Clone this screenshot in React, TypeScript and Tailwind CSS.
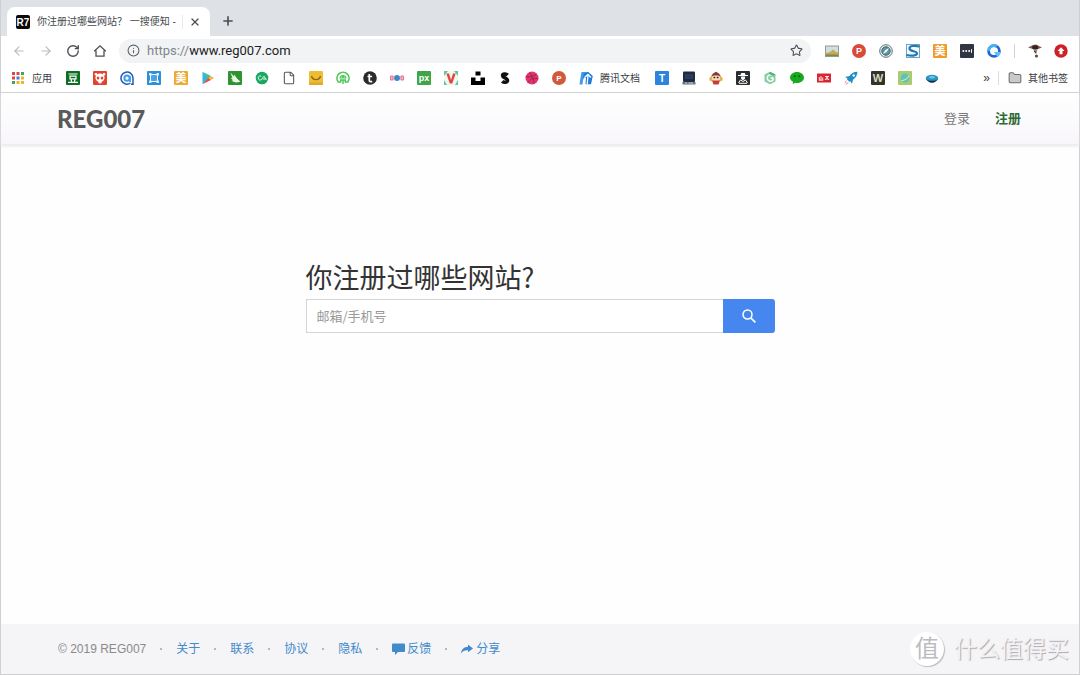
import React from 'react';
import { ArrowLeft, ArrowRight, RotateCw, Info, Star, X, Plus, Folder, File } from 'lucide-react';

type IconItem = { name: string; icon: React.ReactNode; label?: string };

const Svg = ({ children }: { children: React.ReactNode }) => (
  <svg viewBox="0 0 14 14" className="w-[14px] h-[14px] shrink-0" aria-hidden="true">{children}</svg>
);

const Tile = ({ fill, text, color = '#fff', round = false, size = 9 }: { fill: string; text: string; color?: string; round?: boolean; size?: number }) => (
  <Svg>
    <rect width="14" height="14" rx={round ? 7 : 1} fill={fill} />
    <text x="7" y={7 + size * 0.37} textAnchor="middle" fontSize={size} fontWeight="700" fill={color}>{text}</text>
  </Svg>
);

const BOOKMARKS: IconItem[] = [
  {
    name: '豆瓣',
    icon: (
      <Svg>
        <rect width="14" height="14" rx="1" fill="#0d6e22" />
        <path d="M2.5 3h9M4 5.2h6v2.6H4zM2 11.3h10M5 8.5l.7 2.5M9 8.5l-.7 2.5" stroke="#fff" strokeWidth="1.2" fill="none" />
      </Svg>
    ),
  },
  {
    name: 'panda',
    icon: (
      <Svg>
        <rect width="14" height="14" rx="1" fill="#e2442f" />
        <circle cx="3" cy="3.2" r="1.3" fill="#fff" />
        <circle cx="11" cy="3.2" r="1.3" fill="#fff" />
        <ellipse cx="7" cy="6.8" rx="4.6" ry="4.2" fill="#fff" />
        <ellipse cx="5" cy="7" rx="1.3" ry="1.5" fill="#e2442f" />
        <ellipse cx="9" cy="7" rx="1.3" ry="1.5" fill="#e2442f" />
        <path d="M5.500 10h3v2.300h-3z" fill="#fff" />
      </Svg>
    ),
  },
  {
    name: 'a-ring',
    icon: (
      <Svg>
        <path d="M10.500 12A6 6 0 1 1 13 7v6.300h-2" stroke="#2857b5" strokeWidth="1.500" fill="none" />
        <circle cx="7" cy="7.200" r="2.600" stroke="#3aa0e8" strokeWidth="2" fill="none" />
        <path d="M10 5v6" stroke="#3aa0e8" strokeWidth="1.800" />
      </Svg>
    ),
  },
  {
    name: 'frame',
    icon: (
      <Svg>
        <rect width="14" height="14" rx="1" fill="#2f8fd8" />
        <rect x="3.5" y="3.5" width="7" height="7" fill="#4aa3e4" stroke="#fff" />
        <path d="M2 2h2.5v2.5H2zM9.500 2H12v2.500H9.500zM2 9.500h2.500V12H2zM9.500 9.500H12V12H9.500z" fill="#d6ecfb" />
      </Svg>
    ),
  },
  { name: '美', icon: <Tile fill="#f0a834" text="美" size={11} /> },
  {
    name: 'play',
    icon: (
      <Svg>
        <path d="M1.500 .8v12.400L7.500 7z" fill="#34b7d6" />
        <path d="M1.500 .8L10 5 7.500 7.500z" fill="#3cc48a" />
        <path d="M1.500 13.200L10 9 7.500 6.500z" fill="#e8475a" />
        <path d="M9.700 4.900L13.300 7 9.700 9.100 7.300 7z" fill="#f6b93b" />
      </Svg>
    ),
  },
  {
    name: 'leaf',
    icon: (
      <Svg>
        <rect width="14" height="14" rx="1" fill="#2f9331" />
        <path d="M2.500 1.500l3.500 4 .3-2L9 7.500l3.500 3.200L8 11.500 3.500 10l1.500-.8L2.800 7l1.500-.3z" fill="#e9f7e4" />
      </Svg>
    ),
  },
  {
    name: 'cn',
    icon: (
      <Svg>
        <circle cx="7" cy="7" r="6.300" fill="#1aa75f" />
        <path d="M6.300 5.200a2.100 2.100 0 1 0 0 3.600L9 5.200l2 3.400M7.800 8h3.600" stroke="#e2f7ec" strokeWidth="1" fill="none" />
      </Svg>
    ),
  },
  { name: 'page', icon: <File className="w-[14px] h-[14px] text-[#555]" strokeWidth={1.8} /> },
  {
    name: 'smile',
    icon: (
      <Svg>
        <rect width="14" height="14" rx="1" fill="#efbd34" />
        <path d="M2.500 5c1 4.800 8 4.800 9 0" stroke="#8b6317" strokeWidth="1.3" fill="none" />
        <path d="M0 11.500h14V13a1 1 0 0 1-1 1H1a1 1 0 0 1-1-1z" fill="#dda92c" />
      </Svg>
    ),
  },
  {
    name: 'android',
    icon: (
      <Svg>
        <path d="M2 10.500A6 6 0 1 1 12 10.500" stroke="#4cc552" strokeWidth="1.600" fill="none" />
        <path d="M3.500 7.500a3.500 3.500 0 0 1 7 0z" fill="#4cc552" />
        <path d="M1.500 11h3.200V9h4.600v2h3.200M7 9v4" stroke="#4cc552" strokeWidth="1.400" fill="none" />
        <circle cx="5.700" cy="6" r=".6" fill="#fff" />
        <circle cx="8.300" cy="6" r=".6" fill="#fff" />
      </Svg>
    ),
  },
  {
    name: 't-circle',
    icon: (
      <Svg>
        <circle cx="7" cy="7" r="6.800" fill="#2b2b2b" />
        <path d="M6.300 3v6.200c0 1.600 1.500 1.700 2.900 1.200M4.500 5.500h4.600" stroke="#fff" strokeWidth="1.700" fill="none" />
      </Svg>
    ),
  },
  {
    name: 'dots',
    icon: (
      <Svg>
        <rect x="0" y="4.500" width="3.600" height="5" rx="1" fill="#e2758c" />
        <circle cx="7" cy="7" r="3" fill="#3f87c8" />
        <rect x="10.400" y="4.500" width="3.600" height="5" rx="1" fill="#e2758c" />
        <path d="M1.800 5.500v3M12.200 5.500v3" stroke="#fff" strokeWidth=".7" />
      </Svg>
    ),
  },
  { name: 'px', icon: <Tile fill="#3fa548" text="px" size={9} /> },
  {
    name: 'v-frame',
    icon: (
      <Svg>
        <rect width="14" height="14" fill="#f1f8e6" />
        <path d="M0 0h4L0 5zM14 0h-4l4 5zM0 14V9l3 5zM14 14V9l-3 5z" fill="#5ec3b4" />
        <path d="M2.300 2.500L5.800 12.500h2.400l3.500-10H9L7 9 5 2.500z" fill="#e04545" />
      </Svg>
    ),
  },
  {
    name: 'unsplash',
    icon: (
      <Svg>
        <path d="M4.500 .5h5v4h-5zM0 6.500h4.500v3.500h5V6.500H14V14H0z" fill="#000" />
      </Svg>
    ),
  },
  {
    name: 's-mark',
    icon: (
      <Svg>
        <path d="M9.700 4C8 2.400 4.600 2.600 4.600 4.700S9.500 7 9.500 9.300 6 11.900 4.300 10.200" stroke="#111" strokeWidth="3.600" fill="none" />
      </Svg>
    ),
  },
  {
    name: 'dribbble',
    icon: (
      <Svg>
        <circle cx="7" cy="7" r="6.500" fill="#e0346f" />
        <path d="M4.500 1.500C7 4.500 8.500 8 9.200 12.600M.8 6c4 .2 8-.3 10.500-3M3 12c1.500-3.500 5-5.500 10.200-4.200" stroke="#a01d4b" strokeWidth=".9" fill="none" />
      </Svg>
    ),
  },
  { name: 'p-circle', icon: <Tile fill="#d2583c" text="P" round size={8} /> },
  {
    name: 'docs',
    label: '腾讯文档',
    icon: (
      <Svg>
        <path d="M2.500 1H8l-1.500 3L4 9l-.5 4.500H.5l1-7z" fill="#3d9be9" />
        <path d="M5 2.500L9 .8 13.800 5 12 13.200H6.500L7 7 4 6.500z" fill="#1f7bd8" />
        <path d="M5.500 6.500L9 3.500l3 3M9 4.500l-.8 8.700" stroke="#fff" strokeWidth="1.300" fill="none" />
      </Svg>
    ),
  },
  { name: 't-tile', icon: <Tile fill="#2d84dc" text="T" size={10} /> },
  {
    name: 'book',
    icon: (
      <Svg>
        <rect x="1" y=".5" width="12" height="10.500" rx="1" fill="#1f2b45" />
        <path d="M3 3h8v5H3z" fill="#2b3c5c" />
        <path d="M.5 11h13v2.500H.5z" fill="#68727f" />
        <path d="M3 12h2M6.500 12h4.500" stroke="#fff" strokeWidth=".7" />
      </Svg>
    ),
  },
  {
    name: 'avatar',
    icon: (
      <Svg>
        <circle cx="2.500" cy="8" r="2.300" fill="#e9b04c" />
        <circle cx="11.500" cy="8" r="2.300" fill="#e9b04c" />
        <path d="M2 5.500L4 2.500 7 .8l3 1.700 2 3z" fill="#8d3a2c" />
        <rect x="3" y="4.500" width="8" height="5.500" rx="2" fill="#f6dcc2" />
        <path d="M3 9.500h8L9.500 13.500h-5z" fill="#c83d2d" />
        <path d="M4.500 6.500h1.700M7.800 6.500h1.700" stroke="#322" strokeWidth="1.300" />
      </Svg>
    ),
  },
  {
    name: 'spy',
    icon: (
      <Svg>
        <rect width="14" height="14" rx="1" fill="#2b2e31" />
        <path d="M5.200 2h3.600l.7 2H12v1H2V4h2.500zM4.800 5.500h4.400L8.800 8 7 9.300 5.200 8z" fill="#fff" />
        <path d="M2.500 12l2-3L7 10.500 9.500 9l2 3M3 12.300h8" stroke="#fff" fill="none" />
      </Svg>
    ),
  },
  {
    name: 'c-hex',
    icon: (
      <Svg>
        <path d="M7 .8L12.500 3.500v7L7 13.300 1.500 10.500v-7z" fill="#83cfa1" />
        <path d="M9.800 4.800A3.200 3.200 0 1 0 10 9V7H7.500" stroke="#fff" strokeWidth="1.500" fill="none" />
        <path d="M7 .8L12.500 3.500 10 5 6 3z" fill="#53b37a" />
      </Svg>
    ),
  },
  {
    name: 'wechat',
    icon: (
      <Svg>
        <path d="M7 1c4 0 7 2.500 7 5.500S11 12 7 12c-.7 0-1.300-.1-1.900-.2L2.700 13.300l.4-2.500C1.200 9.900 0 8.300 0 6.500 0 3.500 3 1 7 1z" fill="#19a91f" />
        <circle cx="4.700" cy="5.300" r="1" fill="#0b5d10" />
        <circle cx="9.300" cy="5.300" r="1" fill="#0b5d10" />
      </Svg>
    ),
  },
  {
    name: 'red-label',
    icon: (
      <Svg>
        <rect y="2.500" width="14" height="9" rx=".5" fill="#dc2430" />
        <path d="M2.300 8.800V6M4 9V5M5.700 8.800V6.500M1.800 9.200h4.500M8 5.500h4M10 5v4M8 9l2-2.500L12 9" stroke="#fff" strokeWidth=".9" fill="none" />
      </Svg>
    ),
  },
  {
    name: 'rocket',
    icon: (
      <Svg>
        <path d="M13.500 .8C9.500 .8 7 2.700 5.500 5L1 6l2.500 1.500-.5 1 2.500 2.300 1-.5L8 13l1-4.300C11.500 7 13.300 4.500 13.500.8z" fill="#1d8fc6" />
        <circle cx="9.700" cy="4.500" r="1.200" fill="#fff" />
        <path d="M2.500 10L.8 11.700M4 11.500l-2 2" stroke="#d9534f" strokeWidth="1" />
      </Svg>
    ),
  },
  { name: 'w-tile', icon: <Tile fill="#33332a" color="#d8d8c4" text="W" size={11} /> },
  {
    name: 'planet',
    icon: (
      <Svg>
        <rect width="14" height="14" rx="1" fill="#a8cc72" />
        <circle cx="7" cy="7" r="4.400" fill="#5fc2b4" />
        <path d="M3.500 9.500C7 9.500 10 7.500 10.800 4.800" fill="none" stroke="#e6f5d8" strokeWidth=".9" />
      </Svg>
    ),
  },
  {
    name: 'disc',
    icon: (
      <Svg>
        <path d="M.8 7.300C1.500 10 4.500 11.800 7 11.800s5.500-1.800 6.200-4.500z" fill="#172c48" />
        <ellipse cx="7" cy="6.800" rx="6.200" ry="3" fill="#2696c8" />
        <ellipse cx="7" cy="6.300" rx="3" ry="1.200" fill="#6cc4e4" />
      </Svg>
    ),
  },
];

const EXTENSIONS: IconItem[] = [
  {
    name: 'picture',
    icon: (
      <Svg>
        <rect x=".5" y="2" width="13" height="10.500" fill="#cfdde4" stroke="#9a9a90" />
        <path d="M1 9l4-1 3-2.500L11 8l2 .5V11H1z" fill="#c9a94b" />
        <path d="M1 10.500h12V12H1z" fill="#6f8f52" />
      </Svg>
    ),
  },
  { name: 'p-red', icon: <Tile fill="#d94a38" text="P" round size={9} /> },
  {
    name: 'compass',
    icon: (
      <Svg>
        <circle cx="7" cy="7" r="6.300" fill="#e8f1f2" stroke="#58747c" />
        <circle cx="7" cy="7" r="4.200" fill="#5f97a8" stroke="#3d5c66" />
        <path d="M10 4L7.800 7.800 4 10l2.200-3.800z" fill="#fff" />
      </Svg>
    ),
  },
  {
    name: 's-cut',
    icon: (
      <Svg>
        <rect x=".5" y=".5" width="13" height="13" fill="#f2f8fb" stroke="#6aa3c4" />
        <path d="M13.500 2.500C8 1 3 2 3.500 4.800S11.500 7 11 9.500 5 12 .5 11" stroke="#2479b0" strokeWidth="2.200" fill="none" />
      </Svg>
    ),
  },
  { name: '美', icon: <Tile fill="#f19a2c" text="美" size={11} /> },
  {
    name: 'password',
    icon: (
      <Svg>
        <rect width="14" height="14" rx="1" fill="#2f3542" />
        <circle cx="3.300" cy="7" r="1" fill="#fff" />
        <circle cx="6.200" cy="7" r="1" fill="#fff" />
        <circle cx="9.100" cy="7" r="1" fill="#fff" />
        <path d="M11.500 5.200v3.600" stroke="#fff" />
      </Svg>
    ),
  },
  {
    name: 'q-ring',
    icon: (
      <Svg>
        <circle cx="7" cy="7" r="5.400" fill="none" stroke="#2563d9" strokeWidth="2.800" />
        <path d="M1.600 7A5.400 5.400 0 0 1 9.500 2.200" stroke="#42b4f5" strokeWidth="2.800" fill="none" />
        <path d="M7 8h6v2.500L10.500 13z" fill="#55c4f7" />
      </Svg>
    ),
  },
];

const FOOTER_LINKS = ['关于', '联系', '协议', '隐私'];

const TabStrip = () => (
  <div className="flex items-end h-9 pl-[6px] bg-[#dee1e6]">
    <div className="flex items-center h-[29px] w-[203px] px-[9px] rounded-t-lg bg-white">
      <Svg>
        <rect width="14" height="14" rx="2" fill="#0a0a0a" />
        <text x="7" y="10.500" textAnchor="middle" fontSize="10" fontWeight="700" fill="#fff">R7</text>
      </Svg>
      <span className="flex-1 ml-[7px] overflow-hidden whitespace-nowrap text-[10px] text-[#45494d]">你注册过哪些网站？ 一搜便知 -</span>
      <span className="w-px h-[14px] mr-[6px] bg-[#e8e8e8]" />
      <button aria-label="关闭标签页" className="text-[#4b4f54]"><X className="w-3 h-3" strokeWidth={2.400} /></button>
    </div>
    <button aria-label="新标签页" className="self-center ml-[11px] mt-[6px] text-[#4b4f54]"><Plus className="w-[14px] h-[14px]" strokeWidth={2.800} /></button>
  </div>
);

const Toolbar = () => (
  <div className="flex items-center h-7 px-[11px] pt-px bg-white">
    <div className="flex items-center gap-[13px] text-[#4b4f54]">
      <button aria-label="后退" className="text-[#b9bbbe]"><ArrowLeft className="w-[14px] h-[14px]" strokeWidth={2} /></button>
      <button aria-label="前进" className="text-[#b9bbbe]"><ArrowRight className="w-[14px] h-[14px]" strokeWidth={2} /></button>
      <button aria-label="重新加载"><RotateCw className="w-[14px] h-[14px]" strokeWidth={2.400} /></button>
      <button aria-label="主页">
        <svg viewBox="0 0 14 14" className="w-[14px] h-[14px]" fill="none" stroke="currentColor" strokeWidth="1.300" aria-hidden="true">
          <path d="M1.200 7.300L7 1.800l5.800 5.500M3 6.500v5.700h8V6.500" />
        </svg>
      </button>
    </div>
    <div className="flex flex-1 items-center h-6 ml-3 pl-2 pr-[8px] rounded-full bg-[#f1f3f4]">
      <Info className="w-[13px] h-[13px] shrink-0 text-[#5f6368]" strokeWidth={2} />
      <a href="#" className="flex-1 ml-[7px] font-[Roboto,sans-serif] text-[13px] leading-5 text-[#202124]">
        <span className="text-[#80868b]">https://</span>www.reg007.com
      </a>
      <button aria-label="收藏" className="text-[#4b4f54]"><Star className="w-[13px] h-[13px]" strokeWidth={2} /></button>
    </div>
    <div className="flex items-center gap-[13px] ml-[14px]">
      {EXTENSIONS.map(ext => (
        <button key={ext.name} aria-label={ext.name}>{ext.icon}</button>
      ))}
      <span className="w-px h-[14px] bg-[#cfd1d4]" />
      <div className="flex items-center gap-3">
        <button aria-label="用户">
          <Svg>
            <path d="M0 3.500L5 1l3-.5L14 3.500 10 5 4 4.800z" fill="#8b5a48" />
            <ellipse cx="7.200" cy="3.500" rx="3" ry="2.200" fill="#2c2622" />
            <path d="M5.500 5.500h4L8.500 9.500l-1.500.3z" fill="#998c82" />
            <path d="M6 7l2 1.500" stroke="#322" />
            <circle cx="8.500" cy="12" r="1.600" fill="#55504d" />
          </Svg>
        </button>
        <button aria-label="更新">
          <Svg>
            <circle cx="7" cy="7" r="6.700" fill="#cf2027" />
            <path d="M7 3.200L10.500 7H8.500v3.300h-3V7h-2z" fill="#fff" />
          </Svg>
        </button>
      </div>
    </div>
  </div>
);

const APP_COLORS = ['#e0473c', '#e0473c', '#3fa75a', '#e0473c', '#3f7fe0', '#f0b330', '#3fa75a', '#f0b330', '#f0b330'];

const BookmarkBar = () => (
  <nav className="flex items-center h-[29px] px-[11px] border-b border-[#cfcfd1] bg-white text-[10px] text-[#3c4043]">
    <a href="#" className="flex items-center gap-2 mr-[14px]">
      <svg viewBox="0 0 12 12" className="w-3 h-3" aria-hidden="true">
        {APP_COLORS.map((c, i) => (
          <rect key={i} x={(i % 3) * 4.5} y={Math.floor(i / 3) * 4.5} width="3" height="3" fill={c} />
        ))}
      </svg>
      应用
    </a>
    <div className="flex flex-1 items-center gap-[13px]">
      {BOOKMARKS.map(b => (
        <a key={b.name} href="#" aria-label={b.name} className="flex items-center gap-[7px] whitespace-nowrap">
          {b.icon}
          {b.label && <span className="pr-[2px]">{b.label}</span>}
        </a>
      ))}
    </div>
    <button aria-label="更多书签" className="mr-2 text-[12px]">»</button>
    <span className="w-px h-[14px] mr-[9px] bg-[#dcdde0]" />
    <button className="flex items-center gap-[6px]">
      <Folder className="w-[14px] h-[14px] text-[#6a6d70]" fill="#c9cacc" strokeWidth={1.800} />
      其他书签
    </button>
  </nav>
);

const App: React.FC = () => {
  return (
    <div className="flex flex-col min-h-screen border-x border-b border-[#d0d0d2] bg-[#fefefe] font-['Liberation_Sans','Noto_Sans_CJK_SC',sans-serif]">
      <TabStrip />
      <Toolbar />
      <BookmarkBar />

      <header className="flex items-center justify-between h-[52px] pl-14 pr-[58px] border-b border-[#eeedf0] bg-linear-to-b from-white to-[#f8f6fa] shadow-[0_1px_3px_#e4e4e6]">
        <a href="#" className="font-[Lato,sans-serif] text-[24px] font-black text-[#5a5a5a]">REG007</a>
        <div className="flex gap-[25px] text-[13px]">
          <a href="#" className="text-[#777]">登录</a>
          <a href="#" className="font-bold text-[#2f6b35]">注册</a>
        </div>
      </header>

      <main className="flex-1 w-full max-w-[469px] mx-auto pt-[114px] font-['Noto_Sans_CJK_SC',sans-serif]">
        <h1 className="text-[27px] leading-9 text-[#333]"><label htmlFor="account">你注册过哪些网站?</label></h1>
        <form className="flex h-[34px] mt-1" onSubmit={e => e.preventDefault()}>
          <input
            id="account"
            type="text"
            placeholder="邮箱/手机号"
            className="flex-1 min-w-0 px-[10px] border border-r-0 border-[#d5d5d8] bg-white text-[13px] text-[#333] placeholder:text-[#999] outline-none"
          />
          <button aria-label="搜索" className="flex items-center justify-center w-[52px] rounded-r-[3px] bg-[#4587ef] text-white">
            <svg viewBox="0 0 14 14" className="w-[14px] h-[14px]" fill="none" stroke="currentColor" aria-hidden="true">
              <circle cx="5.500" cy="5.500" r="4.500" strokeWidth="1.500" />
              <path d="M8.800 8.800l4.500 4.500" strokeWidth="1.800" />
            </svg>
          </button>
        </form>
      </main>

      <footer className="flex items-center justify-between h-[50px] pl-[57px] pr-[10px] bg-[#f5f4f7] text-[12px] text-[#428bca]">
        <div className="flex items-center gap-[14px]">
          <span className="text-[#8a8a8c]">© 2019 REG007</span>
          {FOOTER_LINKS.map(link => (
            <React.Fragment key={link}>
              <span className="w-[2px] h-[2px] rounded-full bg-[#a5a5a8]" />
              <a href="#">{link}</a>
            </React.Fragment>
          ))}
          <span className="w-[2px] h-[2px] rounded-full bg-[#a5a5a8]" />
          <a href="#" className="flex items-center gap-[2px]">
            <svg viewBox="0 0 13 12" className="w-[13px] h-3" fill="currentColor" aria-hidden="true">
              <path d="M1 .5h11a1 1 0 0 1 1 1V8a1 1 0 0 1-1 1H6l-3 3V9H1a1 1 0 0 1-1-1V1.500a1 1 0 0 1 1-1z" />
            </svg>
            反馈
          </a>
          <span className="w-[2px] h-[2px] rounded-full bg-[#a5a5a8]" />
          <a href="#" className="flex items-center gap-[3px]">
            <svg viewBox="0 0 12 12" className="w-3 h-3" fill="currentColor" aria-hidden="true">
              <path d="M7 1.500L12 5.500 7 9.300V7.200C3.800 7 1.500 8 0 10.500 .3 6.500 2.800 4 7 3.800z" />
            </svg>
            分享
          </a>
        </div>
        <div className="flex items-center gap-[10px] text-[#f3f2f5] text-[23px] leading-8 [text-shadow:1px_1px_1px_#a9a9ac]">
          <span className="flex items-center justify-center w-[34px] h-[34px] rounded-full bg-white text-[24px] text-[#bcbcbe] shadow-[1px_1px_1px_#bbb] [text-shadow:none]">值</span>
          <span>什么值得买</span>
        </div>
      </footer>
    </div>
  );
};

export default App;
